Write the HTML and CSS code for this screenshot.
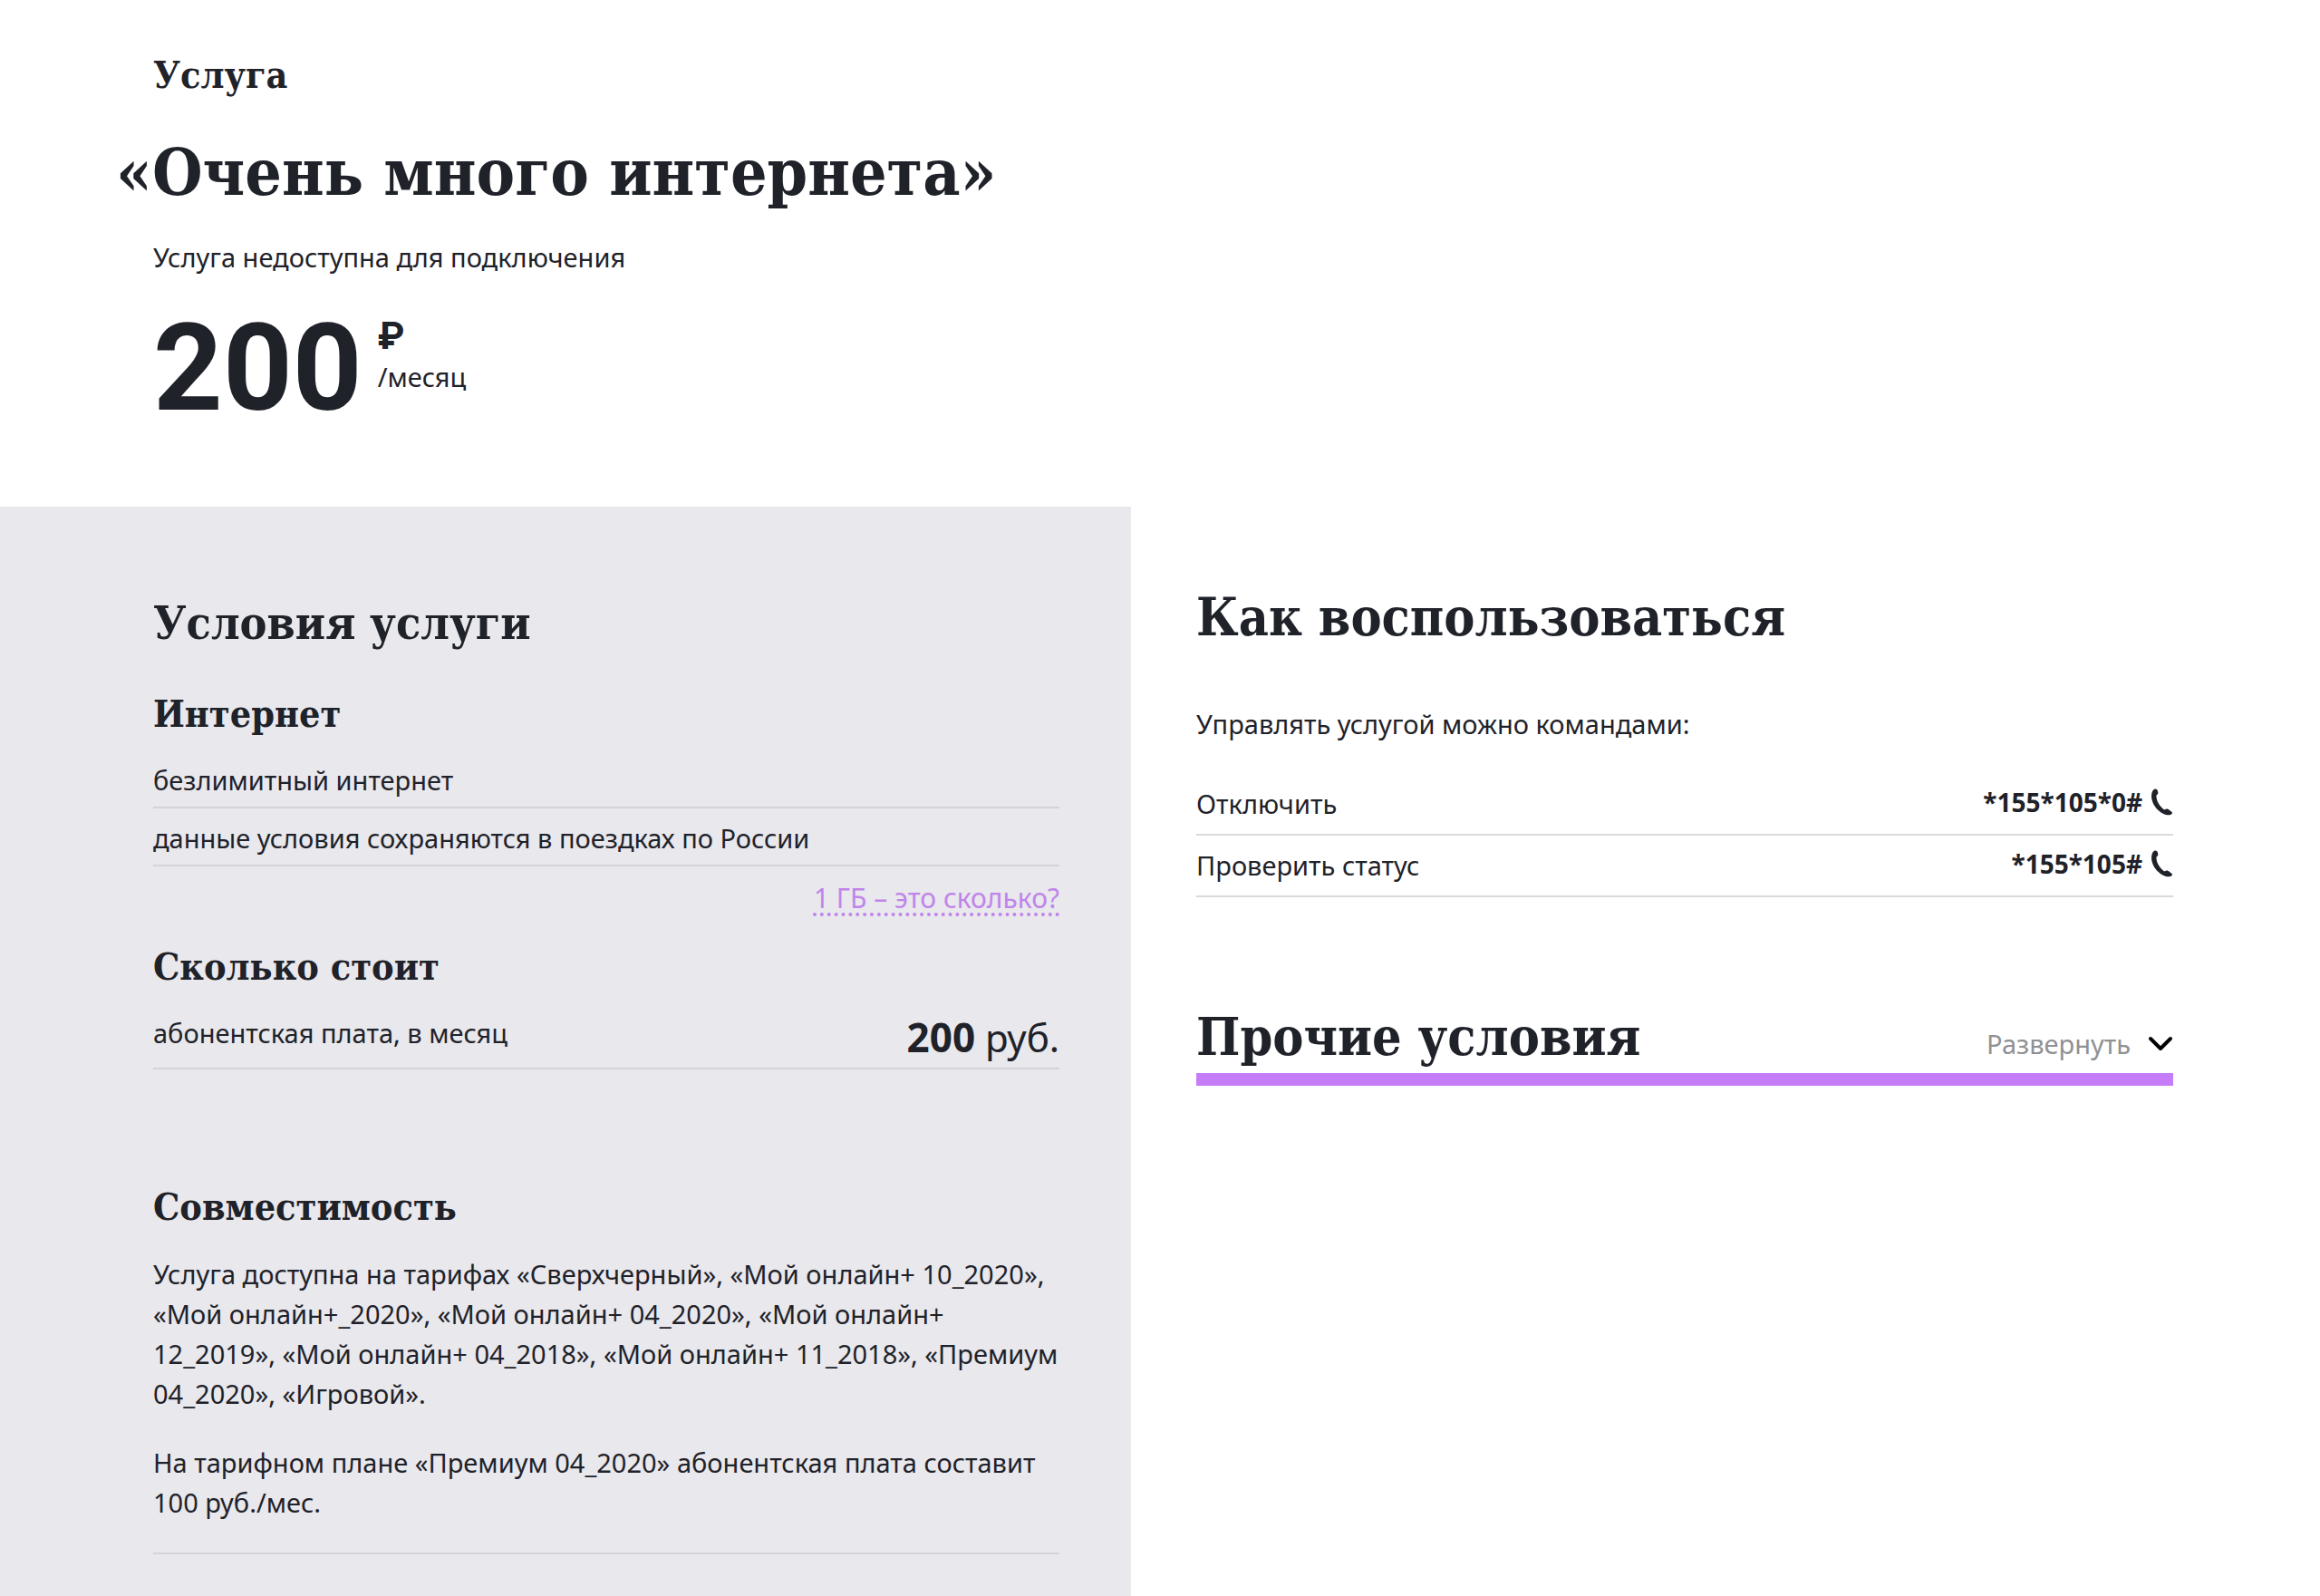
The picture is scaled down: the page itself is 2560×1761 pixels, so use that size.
FILE: index.html
```html
<!DOCTYPE html>
<html lang="ru">
<head>
    <meta charset="UTF-8">
    <meta name="viewport" content="width=device-width, initial-scale=1.0">
    <title>Услуга «Очень много интернета»</title>
    <link rel="stylesheet" href="styles.css">
</head>
<body>
    <header class="service-header">
        <p class="service-label">Услуга</p>
        <h1>«Очень много интернета»</h1>
        <p class="service-status">Услуга недоступна для подключения</p>
        <div class="price">
            <span class="price-value">200</span>
            <div class="price-unit">
                <span class="price-currency">₽</span>
                <span>/месяц</span>
            </div>
        </div>
    </header>

    <main class="content">
        <section class="conditions">
            <h2 class="conditions-title">Условия услуги</h2>

            <h3>Интернет</h3>
            <ul class="rows">
                <li>безлимитный интернет</li>
                <li>данные условия сохраняются в поездках по России</li>
            </ul>
            <div class="hint">
                <a href="#">1 ГБ – это сколько?</a>
            </div>

            <h3>Сколько стоит</h3>
            <ul class="rows">
                <li>
                    <span>абонентская плата, в месяц</span>
                    <span class="cost"><b>200</b> руб.</span>
                </li>
            </ul>

            <div class="compat">
                <h3>Совместимость</h3>
                <p>Услуга доступна на тарифах «Сверхчерный», «Мой онлайн+ 10_2020», «Мой онлайн+_2020», «Мой онлайн+ 04_2020», «Мой онлайн+ 12_2019», «Мой онлайн+ 04_2018», «Мой онлайн+ 11_2018», «Премиум 04_2020», «Игровой».</p>
                <p>На тарифном плане «Премиум 04_2020» абонентская плата составит 100 руб./мес.</p>
            </div>
        </section>

        <section class="usage">
            <h2>Как воспользоваться</h2>
            <p>Управлять услугой можно командами:</p>
            <ul class="rows commands">
                <li>
                    <span>Отключить</span>
                    <a href="tel:*155*105*0%23">
                        *155*105*0#
                        <svg class="phone" viewBox="0 0 24 30" aria-hidden="true">
                            <path d="M3 1C5 0 6.500 1 7 3c.8 2.500 0 3.500-1.500 4.500C5 13 9 20 14.500 23.500c2-1.500 3.500-1.200 5.500.5l2.500 2c1 1 .5 2.500-1.500 3C14 31 1 22 0 9 0 5 1 2 3 1z"/>
                        </svg>
                    </a>
                </li>
                <li>
                    <span>Проверить статус</span>
                    <a href="tel:*155*105%23">
                        *155*105#
                        <svg class="phone" viewBox="0 0 24 30" aria-hidden="true">
                            <path d="M3 1C5 0 6.500 1 7 3c.8 2.500 0 3.500-1.500 4.500C5 13 9 20 14.500 23.500c2-1.500 3.500-1.200 5.500.5l2.500 2c1 1 .5 2.500-1.500 3C14 31 1 22 0 9 0 5 1 2 3 1z"/>
                        </svg>
                    </a>
                </li>
            </ul>

            <div class="other">
                <h2>Прочие условия</h2>
                <button type="button" class="expand">
                    Развернуть
                    <svg class="chevron" viewBox="0 0 28 18" aria-hidden="true">
                        <path d="M3 3l11 11L25 3"/>
                    </svg>
                </button>
            </div>
        </section>
    </main>
</body>
</html>
```
FILE: styles.css
```css
* {
    box-sizing: border-box;
}
body {
    margin: 0;
    font-family: "Noto Sans", sans-serif;
    font-size: 29px;
    line-height: 44px;
    color: #1f2229;
    background: #fff;
}
h1, h2, h3, p, ul {
    margin: 0;
    padding: 0;
}
h1, h2, h3, .service-label {
    font-family: "DejaVu Serif Condensed", "DejaVu Serif", serif;
    font-weight: bold;
}
h1 {
    font-size: 71px;
    line-height: 84px;
}
h2 {
    font-size: 57px;
    line-height: 68px;
}
h3, .service-label {
    font-size: 41px;
    line-height: 48px;
}

/* Шапка */
.service-header {
    padding: 59px 169px 93px;
}
.service-header h1 {
    margin: 41px 0 30px -41px;
}
.price {
    display: flex;
    gap: 17px;
    margin-top: 42px;
}
.price-value {
    font-family: Roboto, sans-serif;
    font-size: 134px;
    line-height: 118px;
    font-weight: bold;
}
.price-unit {
    display: flex;
    flex-direction: column;
}
.price-currency {
    font-family: Roboto, sans-serif;
    font-size: 42px;
    line-height: 46px;
    font-weight: bold;
}

/* Две колонки */
.content {
    display: grid;
    grid-template-columns: 39fr 41fr;
}
.rows {
    list-style: none;
}
.rows li {
    display: flex;
    justify-content: space-between;
    padding: 11px 0 7px;
    border-bottom: 2px solid #d3d3d8;
}

.conditions {
    padding: 99px 79px 46px 169px;
    background: #e8e8ed;
}
.conditions-title {
    margin-bottom: 46px;
    font-size: 50px;
    line-height: 60px;
}
.conditions h3 {
    margin-bottom: 16px;
}
.hint {
    margin: 13px 0 30px;
    text-align: right;
}
.hint a {
    font-size: 30px;
    color: #c184ea;
    text-decoration: underline dotted 4px;
    text-underline-offset: 5px;
    text-decoration-skip-ink: none;
}
.cost {
    font-size: 42px;
    line-height: 52px;
}
.cost b {
    font-size: 44px;
}
.compat {
    margin-top: 128px;
    padding-bottom: 33px;
    border-bottom: 2px solid #d3d3d8;
}
.compat h3 {
    margin-bottom: 28px;
}
.compat p + p {
    margin-top: 32px;
}

.usage {
    padding: 88px 162px 46px 72px;
}
.usage > p {
    margin: 62px 0 33px;
}
.commands li {
    padding: 11px 0;
    border-color: #dadadc;
}
.commands a {
    display: flex;
    align-items: center;
    align-self: flex-start;
    gap: 10px;
    font-size: 28px;
    line-height: 40px;
    font-weight: bold;
    color: inherit;
    text-decoration: none;
}
.phone {
    width: 24px;
    height: 30px;
    fill: currentColor;
}

.other {
    display: flex;
    justify-content: space-between;
    align-items: flex-end;
    margin-top: 120px;
    padding-bottom: 6px;
    border-bottom: 14px solid #c57cf9;
}
.expand {
    display: flex;
    align-items: center;
    gap: 19px;
    padding: 0 0 4px;
    border: none;
    background: none;
    font: inherit;
    color: #8f9194;
    cursor: pointer;
}
.chevron {
    width: 28px;
    height: 18px;
    fill: none;
    stroke: #000;
    stroke-width: 4;
    stroke-linecap: round;
    stroke-linejoin: round;
}
```
